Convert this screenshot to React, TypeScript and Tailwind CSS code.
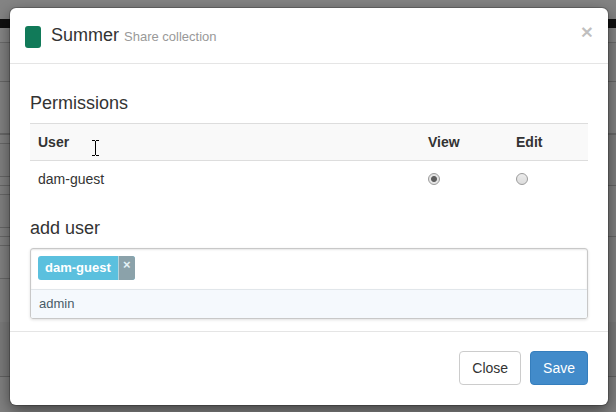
import { useState } from "react";

const leftRows = [
  "h-[19px] bg-[#848484]",
  "h-[9px] bg-[#101010]",
  "h-[15px] border-b bg-[#868686]",
  "h-[39px] border-b bg-[#818181]",
  "h-[53px] border-b-2 bg-[#828282]",
  "h-[9px] border-b bg-[#828282]",
  "h-[33px] border-b bg-[#808080]",
  "h-[9px] border-b bg-[#828282]",
  "h-[9px] border-b bg-[#828282]",
  "h-[33px] border-b bg-[#808080]",
  "h-[9px] border-b bg-[#828282]",
  "h-[9px] border-b bg-[#828282]",
  "h-[33px] border-b bg-[#828282]",
  "h-[43px] bg-[#808080]",
  "h-[55px] border-b bg-[#7b7b7b]",
  "grow bg-[#808080]",
];

const rightRows = [
  "h-[19px] bg-[#848484]",
  "h-[9px] bg-[#101010]",
  "h-[15px] border-b bg-[#868686]",
  "h-[39px] border-b bg-[#808080]",
  "h-[53px] border-b-2 bg-[#828282]",
  "h-[51px] border-b bg-[#7d7d7d]",
  "h-[51px] border-b bg-[#808080]",
  "h-[85px] bg-[#808080]",
  "h-[55px] border-b bg-[#7b7b7b]",
  "grow bg-[#808080]",
];

function Backdrop() {
  return (
    <div aria-hidden="true" className="absolute inset-0 flex">
      {[leftRows, rightRows].map((rows, side) => (
        <div key={side} className="flex flex-1 flex-col">
          {rows.map((row, i) => (
            <div key={i} className={`${row} border-black/20`} />
          ))}
        </div>
      ))}
    </div>
  );
}

function TextCursor() {
  return (
    <svg
      aria-hidden="true"
      className="pointer-events-none absolute top-[17px] left-[81px]"
      width="9"
      height="16"
      viewBox="0 0 9 16"
      shapeRendering="crispEdges"
      fill="#000"
    >
      <path d="M1 0h3v1H1zM5 0h3v1H5zM4 1h1v14H4zM1 15h3v1H1zM5 15h3v1H5z" />
    </svg>
  );
}

const radioClass =
  "m-0 block size-3 appearance-none rounded-full border border-[#9c9c9c] bg-linear-to-b from-[#ececec] to-[#dcdcdc] checked:bg-[radial-gradient(circle,#5e5e5e_0_2.5px,#e4e4e4_3.5px)]";

export default function App() {
  const [access, setAccess] = useState("view");

  return (
    <div className="relative min-h-screen overflow-hidden pt-2 pr-2 pb-[7px] pl-[10px] font-['Liberation_Sans',Arial,sans-serif] text-sm leading-5 text-[#333]">
      <Backdrop />
      <section
        role="dialog"
        aria-labelledby="dialog-title"
        className="relative rounded-md bg-white shadow-[0_0_0_1px_rgba(0,0,0,0.2),0_5px_15px_rgba(0,0,0,0.5)]"
      >
        <header className="flex items-start border-b border-[#e5e5e5] p-[15px]">
          <span className="mt-[3px] h-[22px] w-4 rounded-[3px] bg-[#117a59]" />
          <h1 id="dialog-title" className="ml-[10px] text-lg leading-[25px]">
            Summer <small className="text-[13px] leading-none text-[#999]">Share collection</small>
          </h1>
          <button
            type="button"
            aria-label="Close dialog"
            className="ml-auto text-[21px] leading-[18px] font-bold text-black/25"
          >
            ×
          </button>
        </header>

        <div className="px-5 pt-[29px] pb-3">
          <h2 className="mb-[10px] text-lg leading-5">Permissions</h2>
          <div className="relative -mx-5 px-5">
            <table className="w-full table-fixed border-collapse text-left">
              <colgroup>
                <col />
                <col className="w-22" />
                <col className="w-20" />
              </colgroup>
              <thead>
                <tr className="border-y border-[#ddd] bg-[#f9f9f9]">
                  <th className="p-2">User</th>
                  <th className="p-2">View</th>
                  <th className="p-2">Edit</th>
                </tr>
              </thead>
              <tbody>
                <tr>
                  <td className="p-2">dam-guest</td>
                  {["view", "edit"].map((mode) => (
                    <td key={mode} className="p-2">
                      <input
                        type="radio"
                        name="access"
                        aria-label={`dam-guest ${mode}`}
                        checked={access === mode}
                        onChange={() => setAccess(mode)}
                        className={radioClass}
                      />
                    </td>
                  ))}
                </tr>
              </tbody>
            </table>
            <TextCursor />
          </div>

          <h2 className="mt-[21px] mb-[10px] text-lg leading-5">
            <label htmlFor="add-user">add user</label>
          </h2>
          <div className="overflow-hidden rounded-[3px] border border-[#c8c8c8] shadow-[0_1px_3px_rgba(0,0,0,0.12)]">
            <div className="flex h-10 items-start gap-2 px-[7px] pt-[7px] shadow-[inset_0_1px_2px_rgba(0,0,0,0.1)]">
              <span className="flex h-6 overflow-hidden rounded-[3px] bg-[#5bc0de] text-[13px] leading-6 font-bold text-white">
                <span className="px-[7px]">dam-guest</span>
                <button
                  type="button"
                  aria-label="Remove dam-guest"
                  className="flex w-[17px] justify-center border-l border-[#b5d3dc] bg-[#8ba2aa] pt-px text-[13px] leading-4 text-[#e4f3f7]"
                >
                  ×
                </button>
              </span>
              <input id="add-user" type="text" className="h-6 min-w-0 grow bg-transparent outline-none" />
            </div>
            <ul role="listbox" aria-label="Users" className="border-t border-[#e1e6ea] bg-[#f5f9fd]">
              <li role="option" aria-selected="true" className="px-2 py-1 text-[13px] leading-5 text-[#495c68]">
                admin
              </li>
            </ul>
          </div>
        </div>

        <footer className="flex justify-end gap-[9px] border-t border-[#e5e5e5] px-5 pt-[19px] pb-5">
          <button type="button" className="rounded border border-[#ccc] bg-white px-3 py-1.5">
            Close
          </button>
          <button type="button" className="rounded border border-[#357ebd] bg-[#428bca] px-3 py-1.5 text-white">
            Save
          </button>
        </footer>
      </section>
    </div>
  );
}
